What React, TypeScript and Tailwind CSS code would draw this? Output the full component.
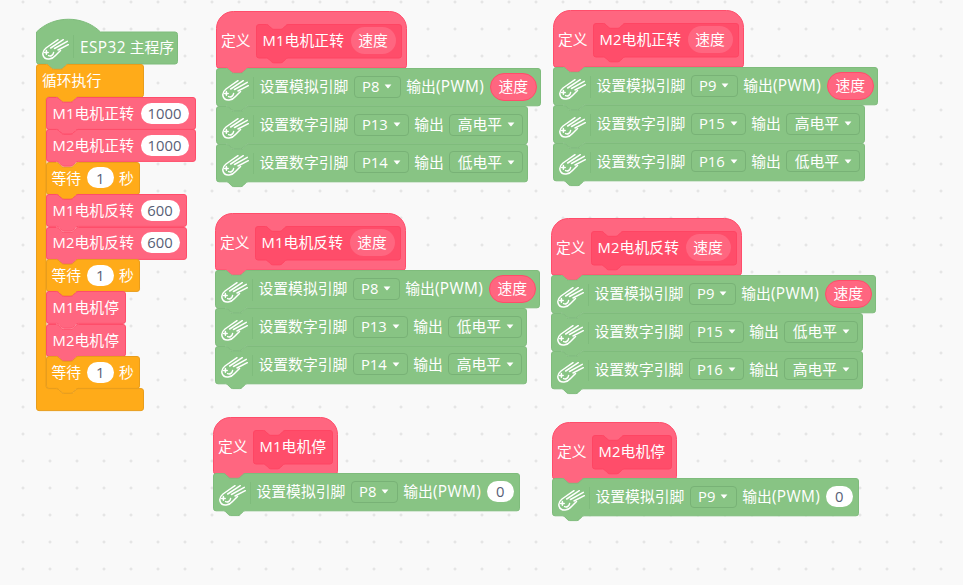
import React from "react";

const NOTCH = "c1.2,0 1.8,.6 2.4,1.2 l2.4,2.4 c.6,.6 1.2,1.2 2.4,1.2 h7.2 c1.2,0 1.8,-.6 2.4,-1.2 l2.4,-2.4 c.6,-.6 1.2,-1.2 2.4,-1.2";
const BUMP = "c-1.2,0 -1.8,.6 -2.4,1.2 l-2.4,2.4 c-.6,.6 -1.2,1.2 -2.4,1.2 h-7.2 c-1.2,0 -1.8,-.6 -2.4,-1.2 l-2.4,-2.4 c-.6,-.6 -1.2,-1.2 -2.4,-1.2";
const R = 2.5;

function blockPath(w: number, h: number) {
  return `M0.5,${R + 0.5} a${R},${R} 0 0 1 ${R},-${R} H10.5 ${NOTCH} H${w - R - 0.5} a${R},${R} 0 0 1 ${R},${R} V${h - R} a${R},${R} 0 0 1 -${R},${R} H32.1 ${BUMP} H${R + 0.5} a${R},${R} 0 0 1 -${R},-${R} Z`;
}
function hatPath(w: number, h: number) {
  const T = 17;
  return `M0.5,${T + 0.5} a${T},${T} 0 0 1 ${T},-${T} H${w - T - 0.5} a${T},${T} 0 0 1 ${T},${T} V${h - R} a${R},${R} 0 0 1 -${R},${R} H32.1 ${BUMP} H${R + 0.5} a${R},${R} 0 0 1 -${R},-${R} Z`;
}
function arcHatPath(w: number, h: number) {
  return `M0.5,13 c17,-17 47,-17 64,0 H${w - R - 0.5} a${R},${R} 0 0 1 ${R},${R} V${h - R} a${R},${R} 0 0 1 -${R},${R} H32.1 ${BUMP} H${R + 0.5} a${R},${R} 0 0 1 -${R},-${R} Z`;
}
function loopPath(w: number, head: number, inner: number, foot: number) {
  const a = 10;
  const y1 = head;
  const y2 = head + inner;
  const total = y2 + foot;
  return `M0.5,${R + 0.5} a${R},${R} 0 0 1 ${R},-${R} H10.5 ${NOTCH} H${w - R - 0.5} a${R},${R} 0 0 1 ${R},${R} V${y1 - R} a${R},${R} 0 0 1 -${R},${R} H${a + 32} ${BUMP} H${a + R} a${R},${R} 0 0 0 -${R},${R} V${y2 - R} a${R},${R} 0 0 0 ${R},${R} H${a + 10.5} ${NOTCH} H${w - R - 0.5} a${R},${R} 0 0 1 ${R},${R} V${total - R} a${R},${R} 0 0 1 -${R},${R} H${R + 0.5} a${R},${R} 0 0 1 -${R},-${R} Z`;
}

const green = { fill: "#88c484", stroke: "#7fbc7c" };
const pink = { fill: "#ff6680", stroke: "#ff4d6a" };
const orange = { fill: "#ffab19", stroke: "#e89d1c" };

function Shape({ d, c }: { d: string; c: { fill: string; stroke: string } }) {
  return (
    <svg className="absolute inset-0 w-full h-full overflow-visible pointer-events-none" aria-hidden="true">
      <path d={d} fill={c.fill} stroke={c.stroke} strokeWidth="1" />
    </svg>
  );
}

function CometIcon() {
  return (
    <svg width="27" height="22" viewBox="0 0 27 22" fill="none" stroke="#fff" strokeWidth="1.5" strokeLinecap="round" strokeLinejoin="round" aria-hidden="true">
      <path d="M16 1.7 L4 10 C1.2 12.3 .5 15 1 17 C1.8 20 4.5 21.3 7.2 21 C10 20.7 12 19.3 13.5 17.5 L18.5 12.5" />
      <path d="M8.7 10 L21.3 1.7 M12.5 10.5 L25.3 3.3 M16 12 L26.3 6.7" />
      <path d="M2.6 14.4 H6.2 M4.4 12.6 V16.2" />
      <path d="M6.6 17.6 C8.7 18.6 11 17.4 11.6 14.6" />
    </svg>
  );
}

function Arrow() {
  return (
    <svg width="8" height="5" viewBox="0 0 8 5" className="shrink-0" aria-hidden="true">
      <path d="M.6 .6 H7.4 L4.6 4 Q4 4.6 3.4 4 Z" fill="#fff" />
    </svg>
  );
}

function Drop({ label, w }: { label: string; w: string }) {
  return (
    <div className={`flex items-center justify-center gap-[5px] h-[22px] rounded-[4px] border border-[#78b276] bg-[#88c484] text-white shrink-0 ${w}`}>
      <span>{label}</span>
      <Arrow />
    </div>
  );
}

function SpeedPill() {
  return (
    <div className="flex items-center justify-center w-[47px] h-[28px] rounded-full border border-[#ff4d6a] bg-[#ff6680] text-white shrink-0">
      速度
    </div>
  );
}

function NumPill({ v, w }: { v: string; w: string }) {
  return (
    <div className={`flex items-center justify-center h-[21px] rounded-full bg-white text-[#575e75] shrink-0 ${w}`}>
      {v}
    </div>
  );
}

function PwmLabel() {
  return (
    <span className="w-[78px] shrink-0">
      输出<span className="text-[15.4px] tracking-[0.4px]">(PWM)</span>
    </span>
  );
}

function GreenBlock({ w, children }: { w: number; children: React.ReactNode }) {
  return (
    <div className="relative h-[37.8px] shrink-0" style={{ width: w }}>
      <Shape d={blockPath(w, 37.8)} c={green} />
      <div className="relative h-full flex items-center text-white">
        <div className="w-[38px] h-full flex items-center justify-center pl-[1px] pt-[6px] shrink-0 relative">
          <CometIcon />
          <span className="absolute right-[0.5px] top-[9px] bottom-[7px] w-px bg-[#7fbc7c]" />
        </div>
        <div className="flex items-center gap-[5.5px] pl-[5.5px] whitespace-nowrap">{children}</div>
      </div>
    </div>
  );
}

function Hat({ name, w, innerW, speed }: { name: string; w: number; innerW: number; speed?: boolean }) {
  return (
    <div className="relative h-[57px] shrink-0" style={{ width: w }}>
      <Shape d={hatPath(w, 57)} c={pink} />
      <div className="relative h-full flex items-center pl-[5px] gap-[5.5px] text-white whitespace-nowrap pt-[2px]">
        <span>定义</span>
        <div className="relative h-[34px] flex items-center pl-[6.5px] gap-[5.5px] shrink-0" style={{ width: innerW }}>
          <Shape d={blockPath(innerW, 34)} c={{ fill: "#ff4d6a", stroke: "#ff4563" }} />
          <span className="relative w-[82.5px] shrink-0 tracking-[0.1px]">{name}</span>
          {speed && (
            <span className="relative flex items-center justify-center w-[45px] h-[27px] rounded-full bg-[#ff6680] text-white">速度</span>
          )}
        </div>
      </div>
    </div>
  );
}

function Stack({ x, y, name, p1, p2, p3, l2, l3, w2 = 312 }: { x: string; y: string; name: string; p1: string; p2: string; p3: string; l2: string; l3: string; w2?: number }) {
  return (
    <div className={`absolute flex flex-col text-[14.8px] leading-none ${x} ${y}`}>
      <Hat name={name} w={191} innerW={146} speed />
      <GreenBlock w={325}>
        <span>设置模拟引脚</span>
        <Drop label={p1} w="w-[47px]" />
        <PwmLabel />
        <SpeedPill />
      </GreenBlock>
      <GreenBlock w={w2}>
        <span>设置数字引脚</span>
        <Drop label={p2} w="w-[55px]" />
        <span>输出</span>
        <Drop label={l2} w="w-[74px]" />
      </GreenBlock>
      <GreenBlock w={w2}>
        <span>设置数字引脚</span>
        <Drop label={p3} w="w-[55px]" />
        <span>输出</span>
        <Drop label={l3} w="w-[74px]" />
      </GreenBlock>
    </div>
  );
}

function StopStack({ x, y, name, pin, w }: { x: string; y: string; name: string; pin: string; w: number }) {
  return (
    <div className={`absolute flex flex-col text-[14.8px] leading-none ${x} ${y}`}>
      <Hat name={name} w={125} innerW={80} />
      <div className="-mt-px">
        <GreenBlock w={w}>
          <span>设置模拟引脚</span>
          <Drop label={pin} w="w-[47px]" />
          <PwmLabel />
          <NumPill v="0" w="w-[27px]" />
        </GreenBlock>
      </div>
    </div>
  );
}

function CallBlock({ name, v, w }: { name: string; v?: string; w: number }) {
  return (
    <div className="relative h-[32.4px] shrink-0" style={{ width: w }}>
      <Shape d={blockPath(w, 32.4)} c={pink} />
      <div className="relative h-full flex items-center pl-[6.5px] gap-[5.5px] text-white whitespace-nowrap">
        <span className="w-[82.5px] shrink-0 tracking-[0.1px] last:w-auto">{name}</span>
        {v && <NumPill v={v} w={v.length > 3 ? "w-[48px]" : "w-[39px]"} />}
      </div>
    </div>
  );
}

function WaitBlock() {
  return (
    <div className="relative h-[32.4px] w-[94px] shrink-0">
      <Shape d={blockPath(94, 32.4)} c={orange} />
      <div className="relative h-full flex items-center pl-[5.5px] gap-[5.5px] text-white whitespace-nowrap">
        <span>等待</span>
        <NumPill v="1" w="w-[27px]" />
        <span>秒</span>
      </div>
    </div>
  );
}

function MainStack() {
  const head = 33;
  const inner = 32.4 * 9;
  return (
    <div className="absolute left-[36px] top-[19px] flex flex-col text-[14.8px] leading-none">
      <div className="relative h-[45px] w-[142px] shrink-0">
        <Shape d={arcHatPath(142, 45)} c={green} />
        <div className="relative h-full flex items-center pt-[13px] text-white whitespace-nowrap">
          <div className="w-[38px] h-full flex items-center justify-center pl-[1px] pt-[1px] shrink-0 relative">
            <CometIcon />
            <span className="absolute right-[0.5px] top-[3px] bottom-[6px] w-px bg-[#7fbc7c]" />
          </div>
          <span className="pl-[6px]">
            <span className="text-[15.4px] tracking-[0.4px]">ESP32</span> 主程序
          </span>
        </div>
      </div>
      <div className="relative w-[108px]" style={{ height: head + inner + 22 }}>
        <Shape d={loopPath(108, head, inner, 22)} c={orange} />
        <div className="relative h-[33px] flex items-center pl-[6px] text-white">循环执行</div>
        <div className="relative pl-[10px] flex flex-col items-start">
          <CallBlock name="M1电机正转" v="1000" w={150} />
          <CallBlock name="M2电机正转" v="1000" w={150} />
          <WaitBlock />
          <CallBlock name="M1电机反转" v="600" w={141} />
          <CallBlock name="M2电机反转" v="600" w={141} />
          <WaitBlock />
          <CallBlock name="M1电机停" w={80} />
          <CallBlock name="M2电机停" w={80} />
          <WaitBlock />
        </div>
      </div>
    </div>
  );
}

export default function App() {
  return (
    <div
      className="relative w-full h-[585px] overflow-hidden bg-[#f9f9f9] bg-[radial-gradient(#dedede_1px,transparent_1.2px)] bg-[length:27px_27px] bg-[position:9.5px_-11.5px]"
      style={{ fontFamily: '"Open Sans","Noto Sans CJK SC",sans-serif' }}
    >
      <MainStack />
      <Stack x="left-[216px]" y="top-[11px]" name="M1电机正转" p1="P8" p2="P13" p3="P14" l2="高电平" l3="低电平" />
      <Stack x="left-[553px]" y="top-[10px]" name="M2电机正转" p1="P9" p2="P15" p3="P16" l2="高电平" l3="低电平" />
      <Stack x="left-[215px]" y="top-[213px]" name="M1电机反转" p1="P8" p2="P13" p3="P14" l2="低电平" l3="高电平" />
      <Stack x="left-[551px]" y="top-[218px]" name="M2电机反转" p1="P9" p2="P15" p3="P16" l2="低电平" l3="高电平" />
      <StopStack x="left-[213px]" y="top-[417px]" name="M1电机停" pin="P8" w={307} />
      <StopStack x="left-[552px]" y="top-[422px]" name="M2电机停" pin="P9" w={307} />
    </div>
  );
}
